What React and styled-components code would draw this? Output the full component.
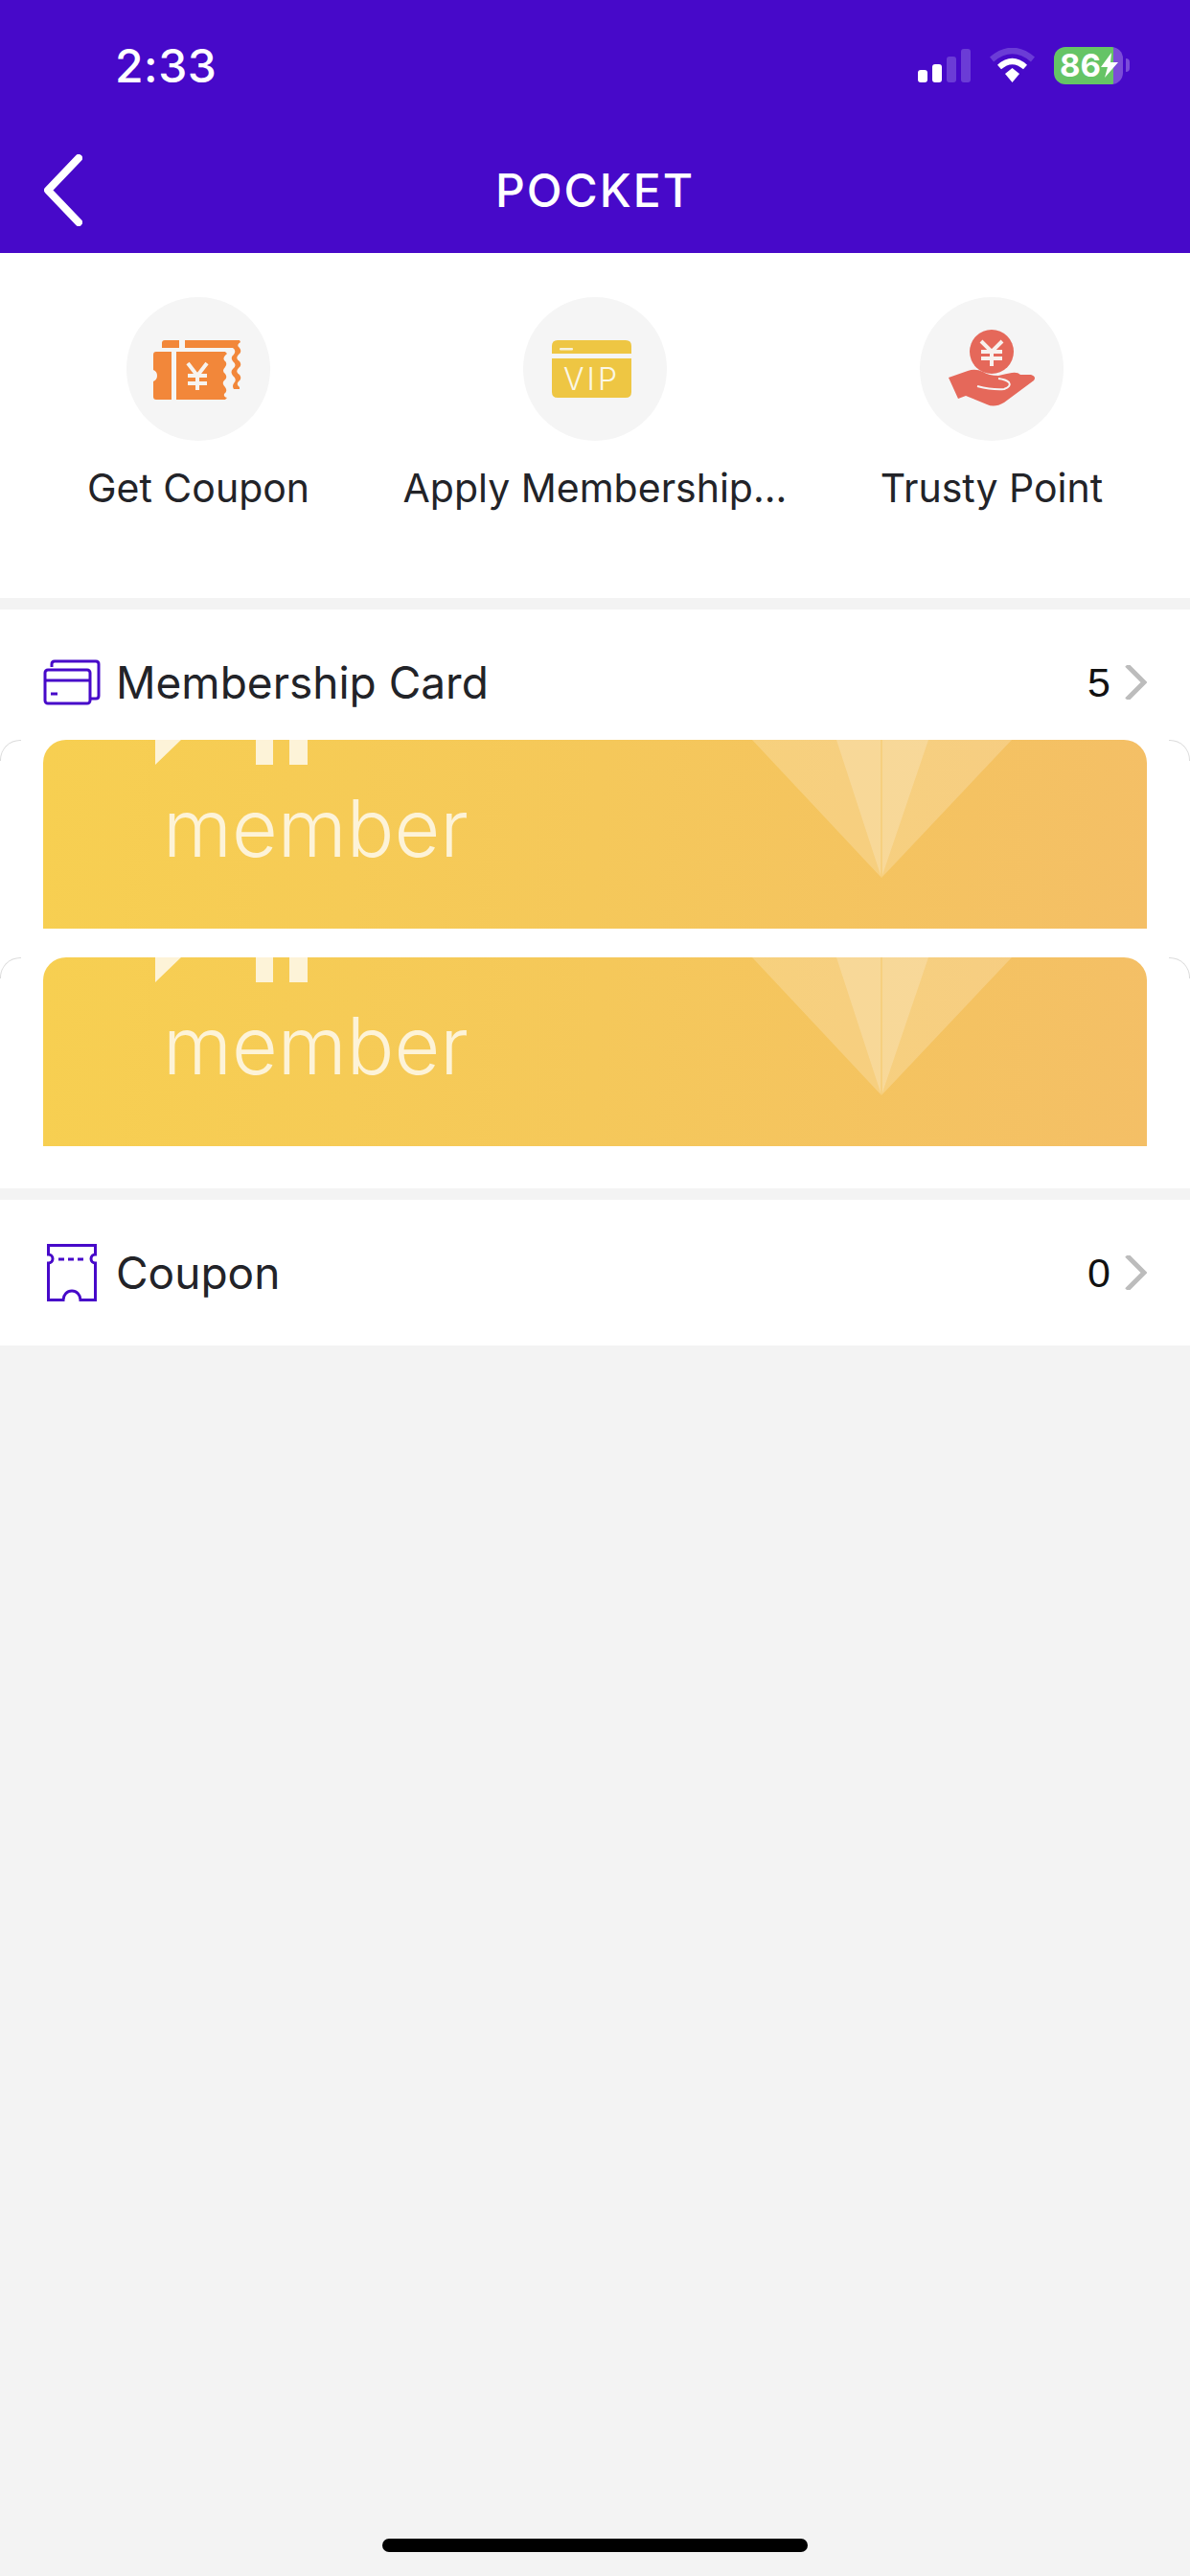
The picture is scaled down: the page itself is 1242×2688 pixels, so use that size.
import React from "react";
import styled, { createGlobalStyle } from "styled-components";

const Global = createGlobalStyle`
  html, body { margin: 0; padding: 0; background: #f3f3f3; }
  body { font-family: Inter, "Liberation Sans", sans-serif; }
  * { box-sizing: border-box; }
`;

const PURPLE = "#4709c9";

const Page = styled.div`
  width: 1242px;
  height: 2688px;
  display: flex;
  flex-direction: column;
  background: #f3f3f3;
  overflow: hidden;
`;
const Header = styled.header`
  height: 264px;
  background: ${PURPLE};
  color: #fff;
  display: flex;
  flex-direction: column;
`;
const StatusBar = styled.div`
  height: 136px;
  display: flex;
  align-items: center;
  justify-content: space-between;
  padding: 0 63px 0 120px;
`;
const Clock = styled.span`
  font-size: 48px;
  font-weight: 500;
  letter-spacing: 0.5px;
`;
const StatusIcons = styled.div`
  display: flex;
  align-items: center;
  gap: 20px;
`;
const Battery = styled.div`
  position: relative;
  width: 72px;
  height: 39px;
  margin-right: 7px;
  border-radius: 12px;
  background: linear-gradient(90deg, #65c466 62px, #7b4cd8 62px);
  font-family: "Inter", sans-serif;
  font-weight: 700;
  font-size: 33px;
  line-height: 39px;
  padding-left: 6px;
  color: #fff;
  &::after {
    content: "";
    position: absolute;
    left: 75px;
    top: 12px;
    width: 4px;
    height: 14px;
    border-radius: 0 4px 4px 0;
    background: #7b4cd8;
  }
`;
const Bolt = styled.svg`
  position: absolute;
  left: 49px;
  top: 6px;
`;
const Nav = styled.nav`
  height: 128px;
  display: grid;
  grid-template-columns: 1fr auto 1fr;
  align-items: center;
  padding: 0 0 4px 46px;
`;
const Title = styled.h1`
  margin: 0;
  font-size: 48px;
  font-weight: 500;
  letter-spacing: 2px;
  transform: translateX(-23px);
`;
const Shortcuts = styled.section`
  height: 360px;
  background: #fff;
  display: grid;
  grid-template-columns: repeat(3, 414px);
  padding-top: 46px;
`;
const Shortcut = styled.div`
  display: flex;
  flex-direction: column;
  align-items: center;
  gap: 24px;
`;
const Disc = styled.div`
  width: 150px;
  height: 150px;
  border-radius: 50%;
  background: #f5f5f5;
`;
const ShortcutLabel = styled.span`
  font-size: 41px;
  line-height: 50px;
  color: #222328;
  white-space: nowrap;
`;
const Section = styled.section`
  background: #fff;
  margin-top: 12px;
`;
const Row = styled.div`
  height: 152px;
  display: flex;
  align-items: center;
  padding: 0 45px;
`;
const RowIcon = styled.span`
  width: 76px;
  display: flex;
  padding-left: ${(p) => p.$inset || 0}px;
`;
const RowTitle = styled.span`
  flex: 1;
  font-size: 46px;
  color: #222328;
`;
const Count = styled.span`
  font-family: "Liberation Sans", Arial, sans-serif;
  font-size: 43px;
  color: #111;
  margin-right: 15px;
`;
const CardList = styled.div`
  margin-top: -16px;
  padding-bottom: 44px;
  display: flex;
  flex-direction: column;
  gap: 30px;
`;
const CardSlot = styled.div`
  position: relative;
  padding: 0 45px;
  &::before,
  &::after {
    content: "";
    position: absolute;
    top: 0;
    width: 21px;
    height: 21px;
    border-top: 1px solid #dcdcdc;
  }
  &::before {
    left: 0;
    border-left: 1px solid #dcdcdc;
    border-top-left-radius: 21px;
  }
  &::after {
    right: 0;
    border-right: 1px solid #dcdcdc;
    border-top-right-radius: 21px;
  }
`;
const Card = styled.div`
  position: relative;
  height: 197px;
  overflow: hidden;
  border-radius: 24px 24px 0 0;
  background: linear-gradient(95deg, #f7cf51 0%, #f5c85a 50%, #f4bf66 100%);
  padding: 37px 0 0 125px;
`;
const CardArt = styled.svg`
  position: absolute;
  left: 0;
  top: 0;
`;
const MemberText = styled.span`
  position: relative;
  font-size: 82.5px;
  font-weight: 300;
  line-height: 110px;
  color: #fdf3d8;
`;
const HomeBar = styled.div`
  width: 444px;
  height: 14px;
  border-radius: 7px;
  background: #000;
  margin: auto auto 25px;
`;

const Chevron = () => (
  <svg width="23" height="36" viewBox="0 0 23 36">
    <path d="M2 0 L20 18 L2 36" fill="none" stroke="#bcbcbc" strokeWidth="5" />
  </svg>
);

const CouponArt = () => (
  <svg width="150" height="150" viewBox="0 0 150 150">
    <path
      d="M31 57 H47 V107 H31 Q28 107 28 104 V88 A6.5 6.5 0 0 0 28 76 V60 Q28 57 31 57Z"
      fill="#f2873a"
    />
    <path
      d="M52 57 H103 L105 59 Q100 63 102 66 Q106 69 103 73 Q99 77 103 80 Q106 84 102 87 Q99 90 103 94 Q106 98 102 101 Q101 104 105 105 L103 107 H52Z"
      fill="#f2873a"
    />
    <path d="M40 45 H55 V53 H37 V48 Q37 45 40 45Z M61 45 H118 L119 47 Q114 50 118 53 Q121 57 117 60 Q113 64 118 67 Q121 71 117 74 Q113 78 118 81 Q121 85 117 88 Q114 91 118 94 L118 96 H112 Q110 93 112 90 Q116 86 111 82 Q108 78 111 75 Q116 71 111 67 Q108 63 112 60 Q115 56 111 53 H61Z" fill="#f2873a" />
    <path
      d="M64 69 L74 82 L84 69 M74 82 V97 M64 82 H84 M64 90 H84"
      fill="none"
      stroke="#f7f3ef"
      strokeWidth="4"
    />
  </svg>
);

const VipArt = () => (
  <svg width="150" height="150" viewBox="0 0 150 150">
    <path d="M36 45 H107 Q113 45 113 51 V59 H30 V51 Q30 45 36 45Z" fill="#eec643" />
    <path d="M30 64 H113 V99 Q113 105 107 105 H36 Q30 105 30 99Z" fill="#eec643" />
    <rect x="38" y="53" width="14" height="2.5" rx="1" fill="#f7f2dc" />
    <text
      x="71.5"
      y="97"
      textAnchor="middle"
      fontFamily="Inter, sans-serif"
      fontSize="32"
      fontWeight="350"
      letterSpacing="3"
      fill="#fbf7e6"
    >
      VIP
    </text>
  </svg>
);

const TrustArt = () => (
  <svg width="150" height="150" viewBox="0 0 150 150">
    <circle cx="75" cy="57" r="23" fill="#e5685a" />
    <path
      d="M64 46 L75 57 L86 46 M75 57 V72 M64 57 H86 M64 64 H86"
      fill="none"
      stroke="#f8f1ee"
      strokeWidth="4"
    />
    <path
      d="M30 84 L50 77 Q58 74 66 78 Q72 82 82 82 Q90 80 96 79 Q102 78 105 81 L116 81 Q122 83 119 87 L88 110 Q78 116 70 112 L48 103 L40 106Z"
      fill="#e5685a"
    />
    <path
      d="M60 93 Q76 97 88 96 Q96 93 93 89 Q90 86 82 85"
      fill="none"
      stroke="#f5f5f5"
      strokeWidth="2"
    />
  </svg>
);

const CardsIcon = () => (
  <svg width="60" height="48" viewBox="0 0 60 48" style={{ display: "block" }}>
    <path
      d="M9 8 V5 Q9 2 12 2 H55 Q58 2 58 5 V38 Q58 41 55 41 H50"
      fill="none"
      stroke={PURPLE}
      strokeWidth="3"
    />
    <rect x="2" y="11" width="47" height="35" rx="3" fill="none" stroke={PURPLE} strokeWidth="3" />
    <path d="M2 22 H49 M8 36 H15" fill="none" stroke={PURPLE} strokeWidth="3" />
  </svg>
);

const TicketIcon = () => (
  <svg width="52" height="60" viewBox="0 0 52 60" style={{ display: "block" }}>
    <path
      d="M1.5 1.5 H50.5 V11 A4.5 4.5 0 0 0 50.5 20 V58.5 H35 A9 9.5 0 0 0 17 58.5 H1.5 V20 A4.5 4.5 0 0 0 1.5 11Z"
      fill="none"
      stroke={PURPLE}
      strokeWidth="3"
    />
    <path d="M12 16 H41" fill="none" stroke={PURPLE} strokeWidth="3" strokeDasharray="6 4" />
  </svg>
);

const MemberCard = () => (
  <CardSlot>
    <Card>
      <CardArt width="1152" height="197" viewBox="0 0 1152 197">
        <path d="M740 0 H1011 L875 144Z" fill="#fff" fillOpacity="0.2" />
        <path d="M828 0 H924 L875 144Z" fill="#fff" fillOpacity="0.2" />
        <path d="M875 0 V144" stroke="#f5c766" strokeWidth="1" />
        <path d="M117 0 H144 L117 26Z M222 0 H240 V26 H222Z M257 0 H276 V26 H257Z" fill="#fdf3d8" />
      </CardArt>
      <MemberText>member</MemberText>
    </Card>
  </CardSlot>
);

export default function App() {
  return (
    <Page>
      <Global />
      <Header>
        <StatusBar>
          <Clock>2:33</Clock>
          <StatusIcons>
            <svg width="55" height="35" viewBox="0 0 55 35">
              <rect x="0" y="22" width="10" height="13" rx="3" fill="#fff" />
              <rect x="15" y="16" width="10" height="19" rx="3" fill="#fff" />
              <rect x="30" y="8" width="10" height="27" rx="3" fill="#6b3cd6" />
              <rect x="45" y="0" width="10" height="35" rx="3" fill="#6b3cd6" />
            </svg>
            <svg width="47" height="36" viewBox="0 0 47 36">
              <path d="M2 12 Q23.5 -6 45 12" fill="none" stroke="#6b3cd6" strokeWidth="6.5" />
              <path d="M10 20 Q23.5 8 37 20" fill="none" stroke="#fff" strokeWidth="6" />
              <path d="M16 27 L23.5 21 L31 27 L23.5 36Z" fill="#fff" />
            </svg>
            <Battery>
              86
              <Bolt width="18" height="26" viewBox="0 0 18 26">
                <path d="M11 0 L0 15 H7 L4 26 L18 10 H10Z" fill="#fff" />
              </Bolt>
            </Battery>
          </StatusIcons>
        </StatusBar>
        <Nav>
          <svg width="40" height="75" viewBox="0 0 40 75">
            <path
              d="M36 4 L4 37.5 L36 71"
              fill="none"
              stroke="#fff"
              strokeWidth="8"
              strokeLinecap="round"
              strokeLinejoin="round"
            />
          </svg>
          <Title>POCKET</Title>
        </Nav>
      </Header>

      <Shortcuts>
        <Shortcut>
          <Disc>
            <CouponArt />
          </Disc>
          <ShortcutLabel>Get Coupon</ShortcutLabel>
        </Shortcut>
        <Shortcut>
          <Disc>
            <VipArt />
          </Disc>
          <ShortcutLabel>Apply Membership...</ShortcutLabel>
        </Shortcut>
        <Shortcut>
          <Disc>
            <TrustArt />
          </Disc>
          <ShortcutLabel>Trusty Point</ShortcutLabel>
        </Shortcut>
      </Shortcuts>

      <Section>
        <Row>
          <RowIcon>
            <CardsIcon />
          </RowIcon>
          <RowTitle>Membership Card</RowTitle>
          <Count>5</Count>
          <Chevron />
        </Row>
        <CardList>
          <MemberCard />
          <MemberCard />
        </CardList>
      </Section>

      <Section>
        <Row>
          <RowIcon $inset={4}>
            <TicketIcon />
          </RowIcon>
          <RowTitle>Coupon</RowTitle>
          <Count>0</Count>
          <Chevron />
        </Row>
      </Section>

      <HomeBar />
    </Page>
  );
}
